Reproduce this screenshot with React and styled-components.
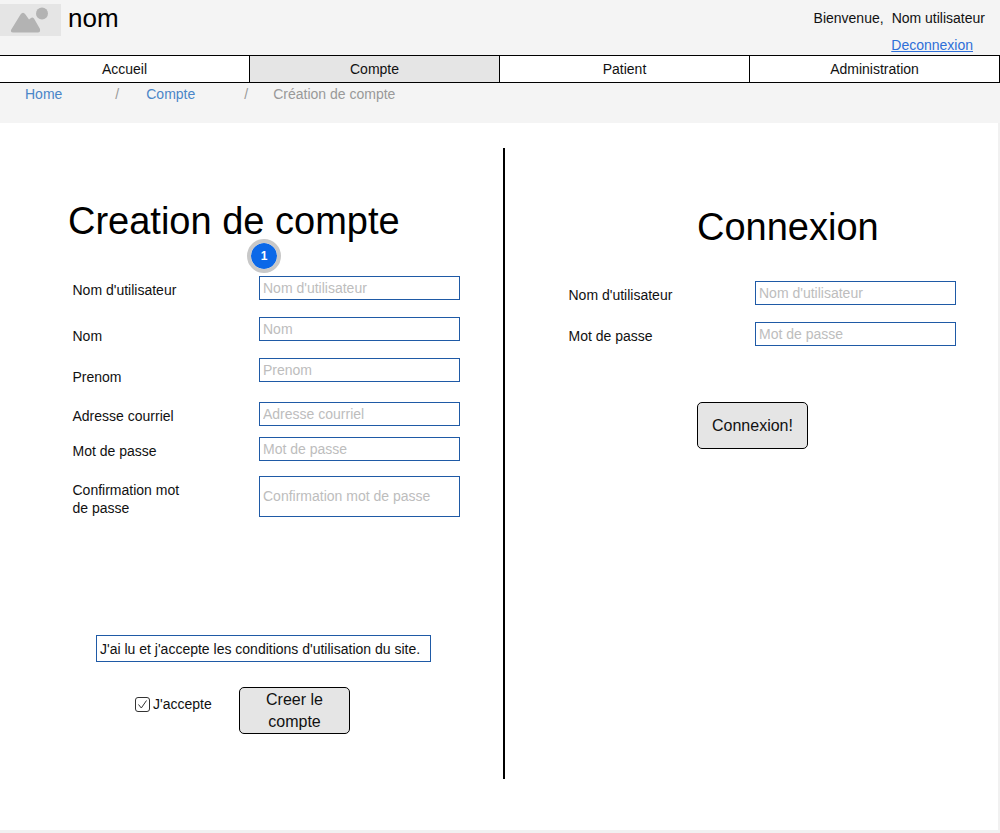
import React from "react";
import styled, { createGlobalStyle } from "styled-components";

const GlobalStyle = createGlobalStyle`
  html, body {
    margin: 0;
    padding: 0;
    background: #fff;
    font-family: "Liberation Sans", Arial, sans-serif;
    font-size: 14px;
    color: #111;
  }
  * {
    box-sizing: border-box;
  }
`;

const Page = styled.div`
  width: 1000px;
  height: 833px;
  overflow: hidden;
  display: flex;
  flex-direction: column;
`;

const Header = styled.header`
  height: 55px;
  background: #f4f4f4;
  display: flex;
  justify-content: space-between;
  padding: 4px 15px 0 0;
`;

const Brand = styled.div`
  display: flex;
  align-items: flex-start;
  gap: 7px;
`;

const Logo = styled.div`
  width: 61px;
  height: 32px;
  background: #e5e5e5;
`;

const SiteName = styled.div`
  font-size: 26px;
  line-height: 28px;
  color: #000;
`;

const UserBox = styled.div`
  display: flex;
  flex-direction: column;
  align-items: flex-end;
  padding-top: 6px;
`;

const Welcome = styled.div`
  display: flex;
  gap: 8px;
  line-height: 16px;
`;

const Logout = styled.a`
  margin: 11px 12px 0 0;
  line-height: 16px;
  color: #2e6fd8;
  text-decoration: underline;
  cursor: pointer;
`;

const Nav = styled.nav`
  height: 28px;
  display: grid;
  grid-template-columns: repeat(4, 250px);
  background: #fff;
  border-top: 1px solid #000;
  border-bottom: 1px solid #000;
`;

const NavItem = styled.div`
  display: flex;
  align-items: center;
  justify-content: center;
  background: ${(p) => (p.$active ? "#e5e5e5" : "#fff")};
  border-right: 1px solid #000;
  color: #111;
`;

const Breadcrumb = styled.div`
  height: 40px;
  background: #f4f4f4;
  display: flex;
  align-items: flex-start;
  padding: 3px 0 0 25px;
  line-height: 16px;
`;

const Crumb = styled.a`
  color: ${(p) => (p.$current ? "#999" : "#4a86c8")};
  margin-right: ${(p) => p.$gap || 0}px;
  cursor: pointer;
`;

const Separator = styled.span`
  color: #999;
  margin-right: ${(p) => p.$gap}px;
`;

const Main = styled.main`
  flex: 1;
  display: flex;
  align-items: flex-start;
  border-right: 2px solid #f1f1f1;
  border-bottom: 3px solid #f1f1f1;
`;

const LeftColumn = styled.section`
  position: relative;
  width: 505px;
  height: 631px;
  margin-top: 25px;
  padding: 51px 0 0 68px;
  border-right: 2px solid #000;
`;

const RightColumn = styled.section`
  flex: 1;
  margin-top: 25px;
  padding: 57px 0 0 63px;
`;

const Title = styled.h1`
  margin: 0 0 ${(p) => p.$after}px ${(p) => p.$indent || 0}px;
  font-weight: 400;
  font-size: 38px;
  line-height: 44px;
  color: #000;
  white-space: nowrap;
`;

const Form = styled.div`
  display: grid;
  grid-template-rows: ${(p) => p.$rows};
  margin-left: ${(p) => p.$indent || 0}px;
`;

const Row = styled.div`
  display: grid;
  grid-template-columns: 187px 201px;
  align-items: start;
`;

const Label = styled.label`
  margin-top: ${(p) => p.$drop}px;
  padding-left: 0.5px;
  max-width: 125px;
  line-height: 18px;
  color: #111;
`;

const Field = styled.input`
  width: 201px;
  height: ${(p) => p.$height || 24}px;
  padding: 0 3px ${(p) => (p.$height ? 2 : 0)}px;
  border: 1px solid #1f5aa6;
  border-radius: 0;
  outline: none;
  background: #fff;
  font-family: inherit;
  font-size: 14px;
  &::placeholder {
    color: #bdbdbd;
    opacity: 1;
  }
`;

const StepBadge = styled.div`
  position: absolute;
  left: 247px;
  top: 91px;
  width: 34px;
  height: 34px;
  border-radius: 50%;
  border: 4px solid #c8c8c8;
  background: #0b68e8;
  background-clip: padding-box;
  color: #fff;
  font-size: 12px;
  font-weight: 700;
  display: flex;
  align-items: center;
  justify-content: center;
`;

const Terms = styled.div`
  width: 335px;
  height: 27px;
  margin: 118px 0 0 28px;
  padding-left: 3px;
  border: 1px solid #1f5aa6;
  line-height: 26px;
  color: #111;
  white-space: nowrap;
`;

const AcceptRow = styled.div`
  display: flex;
  align-items: flex-start;
  margin: 25px 0 0 67px;
`;

const CheckLabel = styled.label`
  display: flex;
  align-items: center;
  gap: 3px;
  width: 104px;
  margin-top: 9px;
  line-height: 16px;
`;

const ActionButton = styled.button`
  width: 111px;
  height: 47px;
  padding: 0 10px;
  border: 1px solid #000;
  border-radius: 5px;
  background: #e5e5e5;
  color: #111;
  font-family: inherit;
  font-size: 16px;
  line-height: 22px;
  cursor: pointer;
`;

const ConnectWrap = styled.div`
  margin: 56px 0 0 129px;
`;

const LogoIcon = () => (
  <svg width="61" height="32" viewBox="0 0 61 32" fill="#b3b3b3">
    <circle cx="42" cy="9.5" r="6" />
    <path
      d="M11 26 L20.5 10.5 Q23 7 25.5 10.5 L29 15.5 L31 14 Q32.5 13 34 14.5 L40 25 Q40.5 28.5 38 28.5 L13 28.5 Q10.5 28.5 11 26 Z"
      strokeLinejoin="round"
    />
  </svg>
);

const CheckIcon = () => (
  <svg width="15" height="15" viewBox="0 0 15 15" fill="none">
    <rect x="0.5" y="0.5" width="14" height="14" rx="2.5" stroke="#333" />
    <path d="M3.5 7.5 L6.3 11 L11.5 3.5" stroke="#333" strokeWidth="1" />
  </svg>
);

const signupFields = [
  { label: "Nom d'utilisateur", drop: 5 },
  { label: "Nom", drop: 10 },
  { label: "Prenom", drop: 10 },
  { label: "Adresse courriel", drop: 5 },
  { label: "Mot de passe", drop: 5 },
  { label: "Confirmation mot de passe", placeholder: "Confirmation mot de passe", drop: 5, height: 41 },
];

const loginFields = [
  { label: "Nom d'utilisateur", drop: 5 },
  { label: "Mot de passe", drop: 5 },
];

const FieldRow = ({ label, placeholder, drop, height }) => (
  <Row>
    <Label $drop={drop}>{label}</Label>
    <Field placeholder={placeholder || label} $height={height} />
  </Row>
);

export default function App() {
  return (
    <Page>
      <GlobalStyle />
      <Header>
        <Brand>
          <Logo>
            <LogoIcon />
          </Logo>
          <SiteName>nom</SiteName>
        </Brand>
        <UserBox>
          <Welcome>
            <span>Bienvenue,</span>
            <span>Nom utilisateur</span>
          </Welcome>
          <Logout>Deconnexion</Logout>
        </UserBox>
      </Header>
      <Nav>
        <NavItem>Accueil</NavItem>
        <NavItem $active>Compte</NavItem>
        <NavItem>Patient</NavItem>
        <NavItem>Administration</NavItem>
      </Nav>
      <Breadcrumb>
        <Crumb $gap={53}>Home</Crumb>
        <Separator $gap={27}>/</Separator>
        <Crumb $gap={49}>Compte</Crumb>
        <Separator $gap={25}>/</Separator>
        <Crumb $current>Création de compte</Crumb>
      </Breadcrumb>
      <Main>
        <LeftColumn>
          <Title $after={33}>Creation de compte</Title>
          <StepBadge>1</StepBadge>
          <Form $indent={4} $rows="41px 41px 44px 35px 39px 41px">
            {signupFields.map((f) => (
              <FieldRow key={f.label} {...f} />
            ))}
          </Form>
          <Terms>J'ai lu et j'accepte les conditions d'utilisation du site.</Terms>
          <AcceptRow>
            <CheckLabel>
              <CheckIcon />
              J'accepte
            </CheckLabel>
            <ActionButton>Creer le compte</ActionButton>
          </AcceptRow>
        </LeftColumn>
        <RightColumn>
          <Title $after={32} $indent={129}>Connexion</Title>
          <Form $rows="41px 24px">
            {loginFields.map((f) => (
              <FieldRow key={f.label} {...f} />
            ))}
          </Form>
          <ConnectWrap>
            <ActionButton>Connexion!</ActionButton>
          </ConnectWrap>
        </RightColumn>
      </Main>
    </Page>
  );
}
